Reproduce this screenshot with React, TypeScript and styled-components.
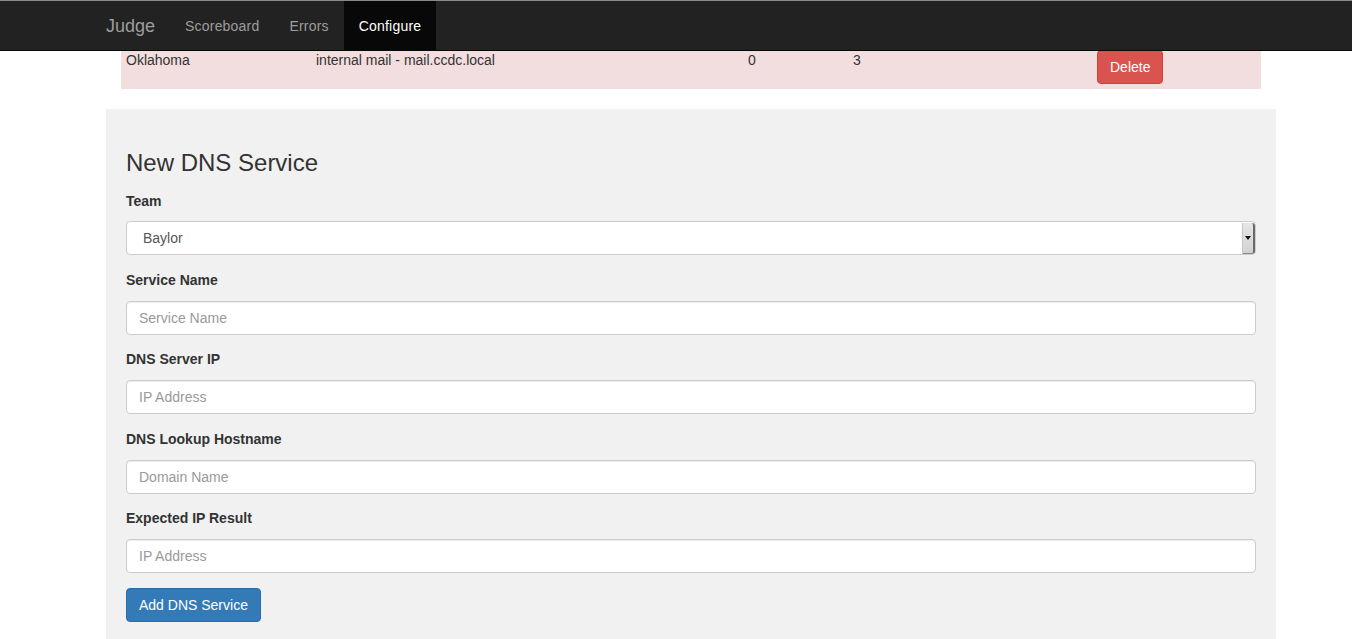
import React from "react";
import styled, { createGlobalStyle } from "styled-components";

const GlobalStyle = createGlobalStyle`
  html, body {
    margin: 0;
    padding: 0;
    background: #fff;
  }
  body {
    font-family: "Liberation Sans", Arial, sans-serif;
    font-size: 14px;
    line-height: 20px;
    color: #333;
    padding-top: 44px;
  }
  * {
    box-sizing: border-box;
  }
`;

// Navbar
const Navbar = styled.nav`
  position: fixed;
  top: 0;
  left: 0;
  right: 0;
  z-index: 10;
  height: 51px;
  background: #222;
  border-top: 1px solid #8a8a8a;
  border-bottom: 1px solid #080808;
`;

const NavContainer = styled.div`
  width: 1170px;
  margin: 0 auto;
  display: flex;
  height: 49px;
`;

const Brand = styled.a`
  padding: 1px 15px 0;
  font-size: 18px;
  line-height: 48px;
  color: #9d9d9d;
  text-decoration: none;
`;

const NavLink = styled.a<{ $active?: boolean }>`
  padding: 1px 15px 0;
  line-height: 48px;
  letter-spacing: 0.2px;
  color: ${({ $active }) => ($active ? "#fff" : "#9d9d9d")};
  background: ${({ $active }) => ($active ? "#080808" : "transparent")};
  text-decoration: none;
`;

// Page
const Container = styled.div`
  width: 1200px;
  margin: 0 auto;
  padding: 0 0 0 30px;
`;

const TableWrap = styled.div`
  padding: 0 15px;
`;

const Table = styled.table`
  width: 100%;
  border-collapse: collapse;
  table-layout: fixed;
  margin-bottom: 20px;
`;

const Row = styled.tr`
  background: #f2dede;
`;

const Cell = styled.td<{ $w: number }>`
  width: ${({ $w }) => $w}px;
  padding: 5px;
  vertical-align: top;
  border-top: 1px solid #ebccd1;
  text-align: left;
`;

const Button = styled.button<{ $variant: "danger" | "primary" }>`
  display: inline-block;
  height: 34px;
  padding: 6px 12px;
  font-family: inherit;
  font-size: 14px;
  line-height: 20px;
  border-radius: 4px;
  color: #fff;
  cursor: pointer;
  background: ${({ $variant }) => ($variant === "danger" ? "#d9534f" : "#337ab7")};
  border: 1px solid ${({ $variant }) => ($variant === "danger" ? "#d43f3a" : "#2e6da4")};
`;

const Well = styled.div`
  background: #f1f1f1;
  padding: 20px 20px 17px;
  min-height: 600px;
`;

const Heading = styled.h3`
  margin: 21px 0 14.6px;
  font-size: 24px;
  font-weight: 500;
  line-height: 26.4px;
  color: #333;
`;

const FormGroup = styled.div`
  display: flex;
  flex-direction: column;
  align-items: flex-start;
  margin-bottom: 14.5px;
`;

const Label = styled.label`
  font-weight: bold;
  margin-bottom: 11px;
`;

const Input = styled.input`
  width: 100%;
  height: 34px;
  padding: 6px 12px;
  font-family: inherit;
  font-size: 14px;
  color: #555;
  background: #fff;
  border: 1px solid #ccc;
  border-radius: 4px;
  box-shadow: inset 0 1px 1px rgba(0, 0, 0, 0.075);
  &::placeholder {
    color: #999;
  }
`;

const SelectWrap = styled.div`
  position: relative;
  width: 100%;
  margin-top: -1px;
`;

const Select = styled.select`
  width: 100%;
  height: 34px;
  padding: 6px 16px;
  font-family: inherit;
  font-size: 14px;
  color: #555;
  background: #fff;
  border: 1px solid #ccc;
  border-radius: 4px;
  appearance: none;
  -webkit-appearance: none;
`;

const SelectArrow = styled.span`
  position: absolute;
  right: 1px;
  top: 2px;
  bottom: 1px;
  width: 13px;
  background: linear-gradient(#e6e6e6, #d2d2d2);
  border-left: 1px solid #c8c8c8;
  border-right: 2px solid #6a6a6a;
  border-bottom: 1px solid #888;
  border-radius: 0 3px 3px 0;
  display: flex;
  align-items: center;
  justify-content: center;
  pointer-events: none;
  &::after {
    content: "";
    border-left: 3px solid transparent;
    border-right: 3px solid transparent;
    border-top: 4px solid #111;
  }
`;

const fields = [
  { label: "Service Name", placeholder: "Service Name" },
  { label: "DNS Server IP", placeholder: "IP Address" },
  { label: "DNS Lookup Hostname", placeholder: "Domain Name" },
  { label: "Expected IP Result", placeholder: "IP Address" },
];

export default function App() {
  return (
    <>
      <GlobalStyle />
      <Navbar>
        <NavContainer>
          <Brand href="#">Judge</Brand>
          <NavLink href="#">Scoreboard</NavLink>
          <NavLink href="#">Errors</NavLink>
          <NavLink href="#" $active>
            Configure
          </NavLink>
        </NavContainer>
      </Navbar>

      <Container>
        <TableWrap>
          <Table>
            <tbody>
              <Row>
                <Cell $w={190}>Oklahoma</Cell>
                <Cell $w={432}>internal mail - mail.ccdc.local</Cell>
                <Cell $w={105}>0</Cell>
                <Cell $w={244}>3</Cell>
                <Cell $w={169}>
                  <Button $variant="danger">Delete</Button>
                </Cell>
              </Row>
            </tbody>
          </Table>
        </TableWrap>

        <Well>
          <Heading>New DNS Service</Heading>
          <FormGroup>
            <Label>Team</Label>
            <SelectWrap>
              <Select defaultValue="Baylor">
                <option>Baylor</option>
                <option>Oklahoma</option>
              </Select>
              <SelectArrow />
            </SelectWrap>
          </FormGroup>
          {fields.map((f) => (
            <FormGroup key={f.label}>
              <Label>{f.label}</Label>
              <Input placeholder={f.placeholder} />
            </FormGroup>
          ))}
          <Button $variant="primary">Add DNS Service</Button>
        </Well>
      </Container>
    </>
  );
}
